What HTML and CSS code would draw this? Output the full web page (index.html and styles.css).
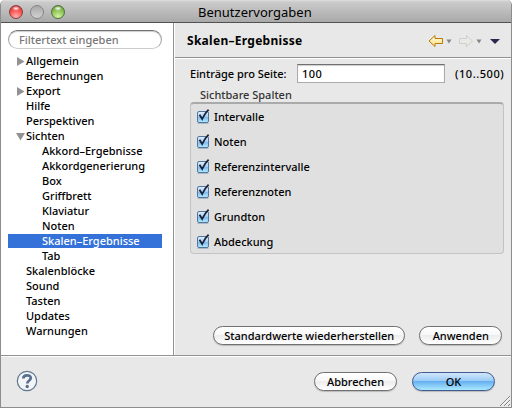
FILE: index.html
```html
<!DOCTYPE html>
<html lang="de">
<head>
<meta charset="utf-8">
<title>Benutzervorgaben</title>
<link rel="stylesheet" href="styles.css">
</head>
<body>
<svg class="defs" width="0" height="0" aria-hidden="true">
  <defs>
    <linearGradient id="boxfill" x1="0" y1="0" x2="0" y2="1">
      <stop offset="0" stop-color="#e4f0fc"/><stop offset=".45" stop-color="#a9cff5"/><stop offset=".55" stop-color="#83bbf0"/><stop offset="1" stop-color="#b5edff"/>
    </linearGradient>
    <linearGradient id="gold" x1="0" y1="0" x2="0" y2="1">
      <stop offset="0" stop-color="#fffbe0"/><stop offset="1" stop-color="#ffdf7c"/>
    </linearGradient>
    <symbol id="check" viewBox="0 0 15 16">
      <rect x="1.5" y="3.5" width="11" height="11" rx="1.5" fill="url(#boxfill)" stroke="#52779f"/>
      <path d="M1.500 15.300H12.500" stroke="#46648a" stroke-opacity=".4"/>
      <path d="M3.500 6.800 6.200 11 Q8.500 5.500 12.600 1.600" fill="none" stroke="#192438" stroke-width="1.800"/>
    </symbol>
  </defs>
</svg>
<div class="window">
  <header class="titlebar">
    <i class="light red"></i><i class="light gray"></i><i class="light green"></i>
    <h1>Benutzervorgaben</h1>
  </header>
  <main class="main">
    <nav class="side">
      <div class="search"><span>Filtertext eingeben</span></div>
      <ul class="tree">
        <li><svg class="tri" viewBox="0 0 9 9"><path d="M1 0 8.500 4.500 1 9z"/></svg><span>Allgemein</span></li>
        <li><span>Berechnungen</span></li>
        <li><svg class="tri" viewBox="0 0 9 9"><path d="M1 0 8.500 4.500 1 9z"/></svg><span>Export</span></li>
        <li><span>Hilfe</span></li>
        <li><span>Perspektiven</span></li>
        <li><svg class="tri" viewBox="0 0 9 9"><path d="M0 1H9L4.500 8.500z"/></svg><span>Sichten</span></li>
        <li class="sub"><span>Akkord–Ergebnisse</span></li>
        <li class="sub"><span>Akkordgenerierung</span></li>
        <li class="sub"><span>Box</span></li>
        <li class="sub"><span>Griffbrett</span></li>
        <li class="sub"><span>Klaviatur</span></li>
        <li class="sub"><span>Noten</span></li>
        <li class="sub selected"><span>Skalen–Ergebnisse</span></li>
        <li class="sub"><span>Tab</span></li>
        <li><span>Skalenblöcke</span></li>
        <li><span>Sound</span></li>
        <li><span>Tasten</span></li>
        <li><span>Updates</span></li>
        <li><span>Warnungen</span></li>
      </ul>
    </nav>
    <section class="page">
      <div class="pagehead">
        <h2>Skalen–Ergebnisse</h2>
        <svg class="nav" width="76" height="14" viewBox="0 0 76 14">
          <path d="M1 7 7 1.500V4.500H14.500V9.500H7V12.500z" fill="url(#gold)" stroke="#b8790c"/>
          <path d="M18.500 5.500H23.500L21 9.500z" fill="#858585"/>
          <path d="M44.500 7 38.500 1.500V4.500H31.500V9.500H38.500V12.500z" fill="#e9e9e6" stroke="#cecfca"/>
          <path d="M48.500 5.500H53.500L51 9.500z" fill="#858585"/>
          <path d="M62 5H72L67 10z" fill="#2b2850"/>
        </svg>
      </div>
      <div class="content">
        <div class="entry">
          <label>Einträge pro Seite:</label>
          <div class="field"><span>100</span></div>
          <span class="range">(10..500)</span>
        </div>
        <div class="legend"><span>Sichtbare Spalten</span></div>
        <div class="group">
          <div class="option"><svg><use href="#check"/></svg><span>Intervalle</span></div>
          <div class="option"><svg><use href="#check"/></svg><span>Noten</span></div>
          <div class="option"><svg><use href="#check"/></svg><span>Referenzintervalle</span></div>
          <div class="option"><svg><use href="#check"/></svg><span>Referenznoten</span></div>
          <div class="option"><svg><use href="#check"/></svg><span>Grundton</span></div>
          <div class="option"><svg><use href="#check"/></svg><span>Abdeckung</span></div>
        </div>
        <div class="actions">
          <div class="button wide"><span>Standardwerte wiederherstellen</span></div>
          <div class="button"><span>Anwenden</span></div>
        </div>
      </div>
    </section>
  </main>
  <footer class="footer">
    <div class="help"><svg width="22" height="22" viewBox="0 0 22 22"><circle cx="11" cy="11" r="9.700" fill="#f2f4f5" stroke="#607994" stroke-width="1.200"/><path d="M7.300 8.500C7.300 4.300 14.800 4.300 14.800 8.100C14.800 10.600 11.300 10.500 11.300 13.600" fill="none" stroke="#58708f" stroke-width="2.700"/><circle cx="11.200" cy="16.500" r="1.700" fill="#58708f"/></svg></div>
    <div class="button"><span>Abbrechen</span></div>
    <div class="button primary"><span>OK</span></div>
    <svg class="grip" width="12" height="12" viewBox="0 0 12 12"><path d="M1 11 11 1M5 11 11 5M9 11 11 9" stroke="#858585"/><path d="M2.300 11 11 2.300M6.300 11 11 6.300" stroke="#fff" stroke-width=".7"/></svg>
  </footer>
</div>
</body>
</html>
```
FILE: styles.css
```css
* { box-sizing: border-box; }
body { margin: 0; background: #fff; font: 500 11px/15px "Noto Sans", "Open Sans", sans-serif; color: #000; letter-spacing: 0; }
.defs { position: absolute; }
.window { width: 512px; height: 408px; display: flex; flex-direction: column; background: #e8e8e8; border: solid #8d8d8d; border-width: 0 1px 1px; border-radius: 5px 5px 0 0; overflow: hidden; }
.titlebar { height: 23px; flex: none; display: flex; align-items: center; gap: 7px; padding: 1px 0 0 8px; background: linear-gradient(#dedede 0, #cbcbcb 2px, #a9a9a9 100%); border-bottom: 1px solid #515151; }
.light { width: 14px; height: 14px; border-radius: 50%; border: 1px solid #777; }
.red { background: radial-gradient(ellipse 4px 2.500px at 50% 20%, #fff 0, #fff0 100%), radial-gradient(circle at 50% 90%, #ffb5b0 0, #fb5a57 50%, #cf2529 100%); border-color: #8c3b3b; }
.gray { background: linear-gradient(#a8a8a8, #d2d2d2); border-color: #858585; }
.green { background: radial-gradient(ellipse 4px 2.500px at 50% 20%, #fff 0, #fff0 100%), radial-gradient(circle at 50% 90%, #d4f5a4 0, #93c75c 50%, #558d2e 100%); border-color: #4d7139; }
h1, h2 { margin: 0; white-space: nowrap; }
h1 { flex: 1; margin-left: 126px; font-size: 13px; line-height: 20px; font-weight: 400; }
.main { height: 333px; flex: none; display: flex; border-bottom: 1px solid #929292; }
.side { width: 173px; flex: none; background: #fff; border-right: 1px solid #929292; padding: 7px 11px 0 7px; }
.search { height: 19px; border: 1px solid #a4a4a4; border-top-color: #737373; border-bottom-color: #ccc; border-radius: 10px; box-shadow: inset 0 1px 1px #ccc; padding-left: 10px; line-height: 18px; color: #777; }
.tree { list-style: none; margin: 5px 0 0; padding: 0; }
.tree li { height: 15px; line-height: 14px; padding-left: 18px; position: relative; white-space: nowrap; }
.tree .sub { padding-left: 34px; }
.tree .selected { background: #3472da linear-gradient(#fff, #fff) bottom / 100% 1px no-repeat; color: #fff; }
.tri { position: absolute; left: 8px; top: 3px; width: 9px; height: 9px; fill: #929292; }
.page { flex: 1; border-left: 1px solid #fff; }
.pagehead { height: 35px; display: flex; align-items: center; justify-content: space-between; border-bottom: 1px solid #929292; padding: 0 8px 0 12px; box-shadow: 0 1px #fff; }
.nav { margin-top: 2px; }
h2 { font-size: 12px; letter-spacing: .28px; }
.content { padding: 6px 8px 0 15px; }
.entry { height: 19px; display: flex; align-items: center; }
.entry label { width: 107px; white-space: nowrap; }
.field { width: 148px; height: 19px; background: #fff; border: 1px solid #aaa; border-top: 1px solid #707070; box-shadow: inset 0 1px 1px #ccc; padding: 1px 0 0 4px; letter-spacing: .5px; }
.range { margin-left: 10px; letter-spacing: .55px; white-space: nowrap; }
.legend { height: 19px; line-height: 24px; padding-left: 10px; color: #333; }
.group { height: 152px; border: 1px solid #c3c3c3; border-top: 2px solid #aaa; border-radius: 4px; background: #e0e0e0; padding: 0 0 0 5px; }
.option { height: 25px; display: flex; align-items: center; gap: 3px; }
.option svg { width: 15px; height: 16px; margin-top: -1px; }
.actions { display: flex; gap: 14px; justify-content: flex-end; padding: 72px 2px 0 0; }
.button { width: 83px; height: 19px; flex: none; border: 1.500px solid #707070; border-radius: 10px; background: linear-gradient(#fff, #f8f8f8 45%, #ececec 50%, #fff); display: flex; align-items: center; justify-content: center; box-shadow: 0 1px 1px #bbb; white-space: nowrap; }
.wide { width: 192px; }
.primary { border-color: #415a91; background: linear-gradient(#d2e6fa, #9dccf7 45%, #67b0f0 50%, #a9e9ff); }
.footer { flex: 1; display: flex; border-top: 1px solid #fff; padding: 15px 16px 0 15px; gap: 15px; position: relative; }
.help { flex: 1; margin-top: -2px; }
.grip { position: absolute; right: 0; bottom: 0; }
```
